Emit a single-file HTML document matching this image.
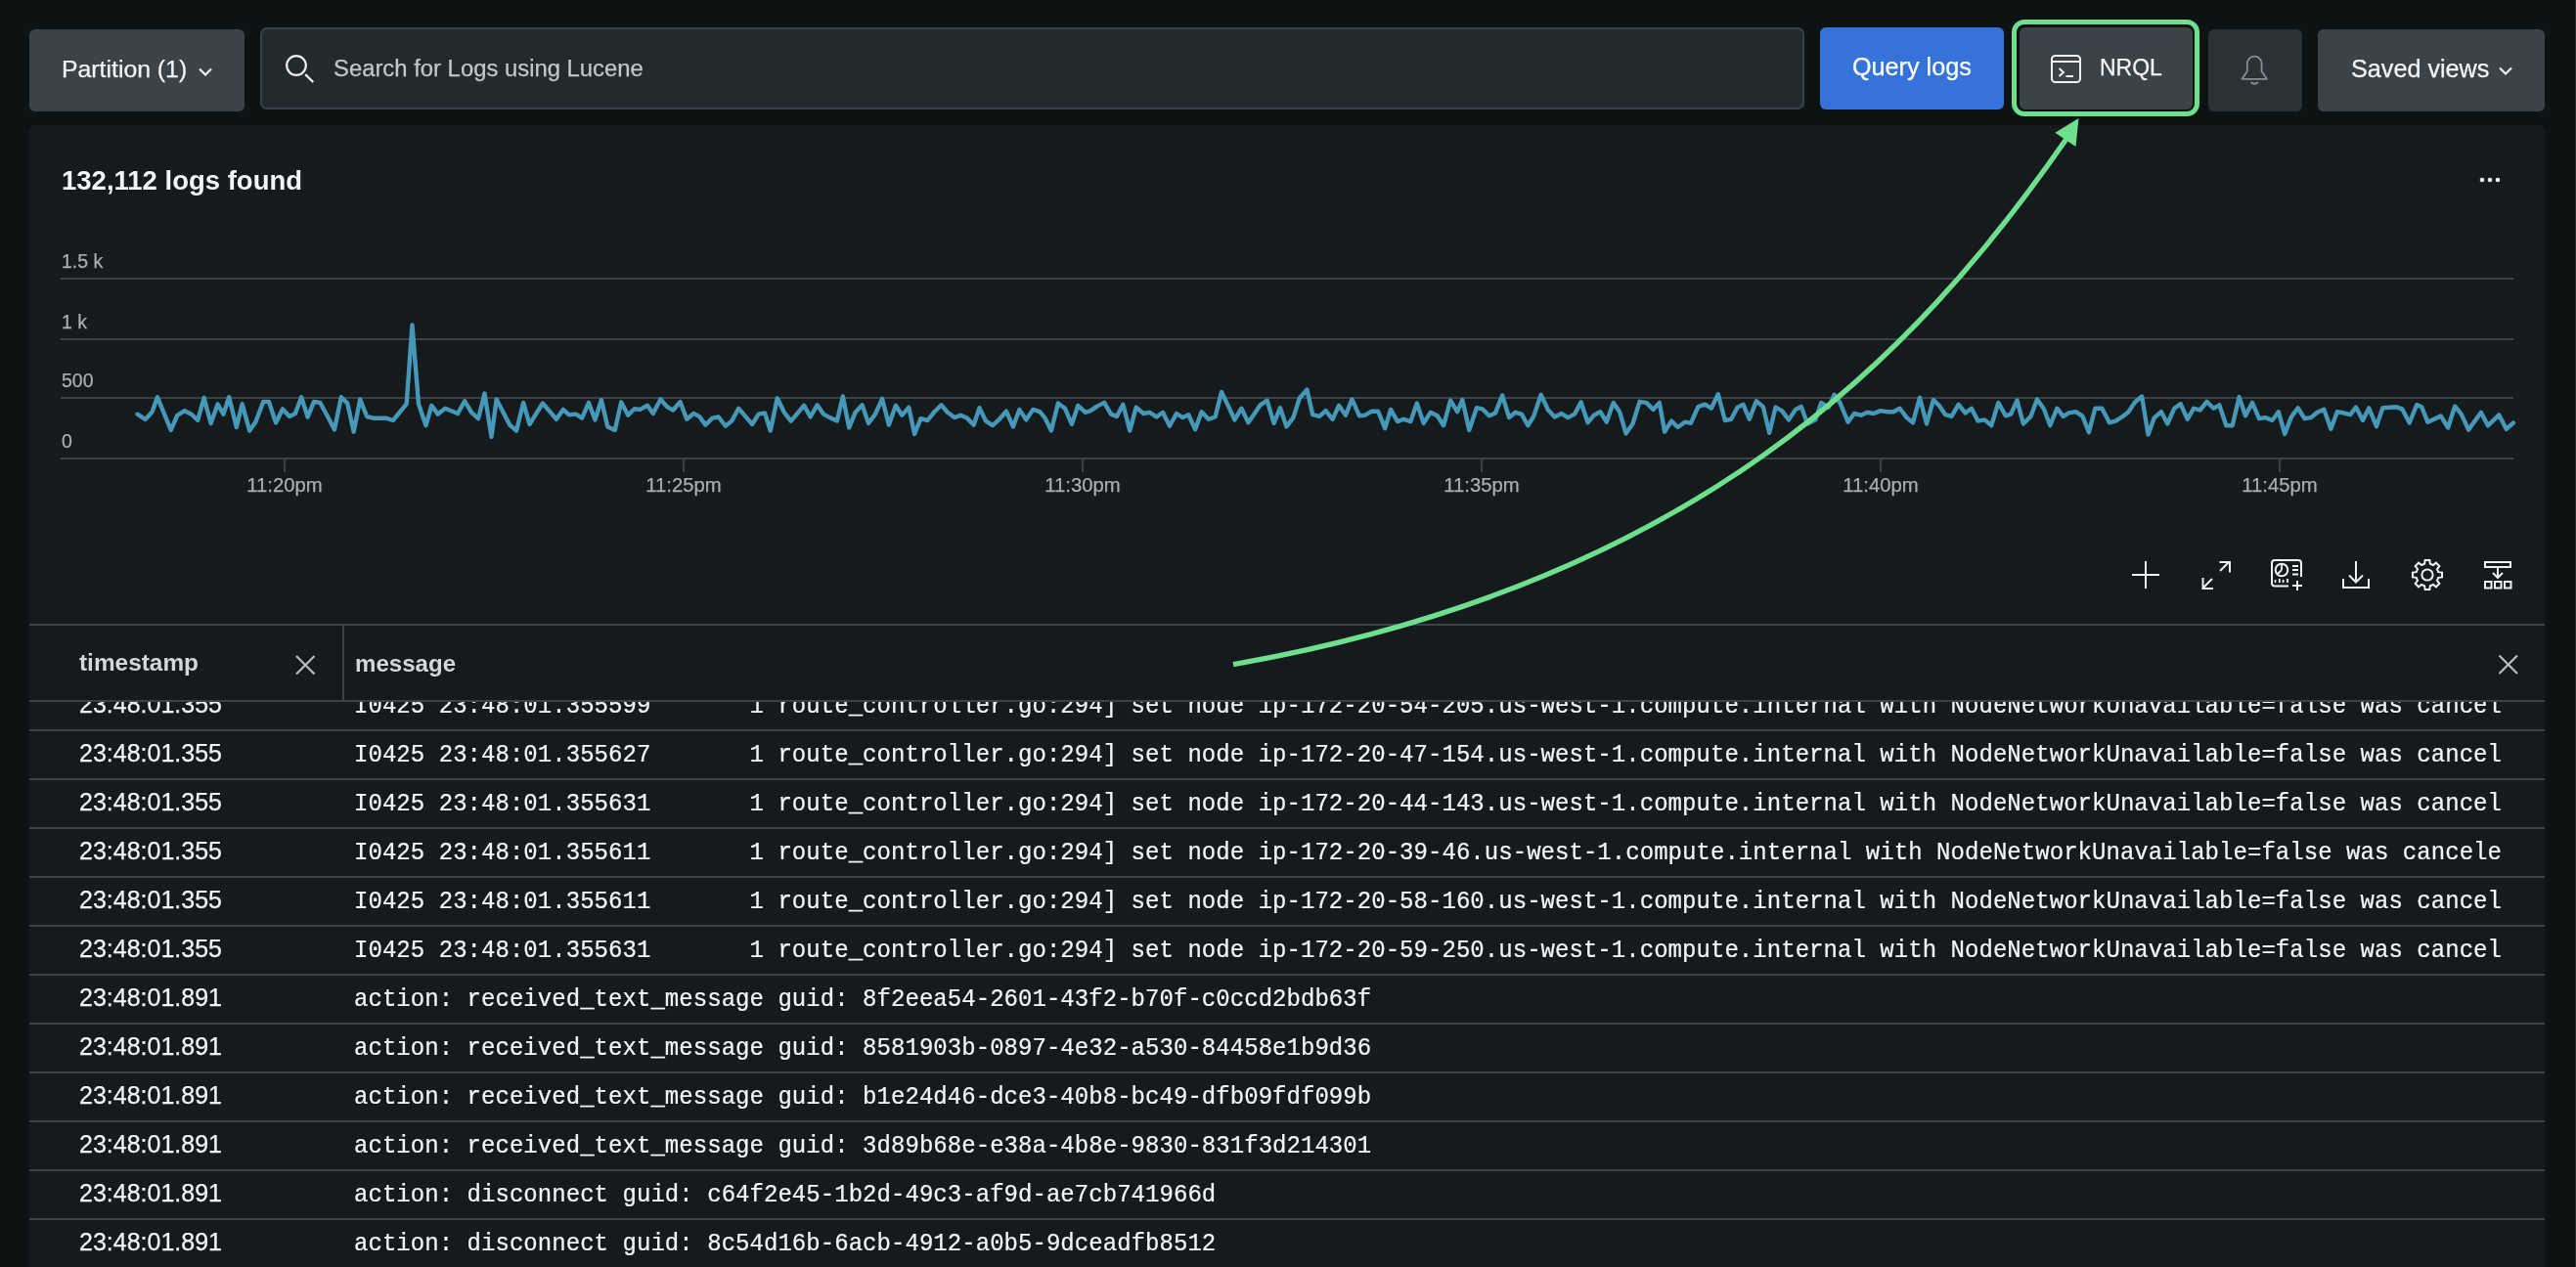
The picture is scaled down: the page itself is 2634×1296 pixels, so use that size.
<!DOCTYPE html>
<html><head><meta charset="utf-8"><title>Logs</title>
<style>
html,body{margin:0;padding:0}
body{width:2634px;height:1296px;overflow:hidden;background:#0d1312;position:relative;font-family:"Liberation Sans",sans-serif}
.t,.m,.b,svg{position:absolute}
.t,.m{will-change:transform}
.m{-webkit-text-stroke:0.22px currentColor}
.t{-webkit-text-stroke:0.25px currentColor}
.t{white-space:pre;font-family:"Liberation Sans",sans-serif}
.m{white-space:pre;font-family:"Liberation Mono",monospace}
</style></head><body>

<div class="b" style="left:30px;top:30px;width:220px;height:84px;background:#3b4248;border-radius:6px;"></div>
<div class="t" style="left:63px;top:59.32px;font-size:24.8px;line-height:24.8px;color:#f2f4f5;font-weight:400;">Partition (1)</div>
<svg style="left:200px;top:66px" width="20" height="14" viewBox="0 0 20 14"><path d="M4 4.5 L10 10.5 L16 4.5" fill="none" stroke="#eef0f1" stroke-width="2.2"/></svg>
<div class="b" style="left:266px;top:28px;width:1579px;height:84px;background:#222a2d;border-radius:7px;box-sizing:border-box;border:2px solid #394146;"></div>
<svg style="left:288px;top:52px" width="40" height="40" viewBox="0 0 40 40"><circle cx="15" cy="15" r="9.8" fill="none" stroke="#eef0f1" stroke-width="2.2"/><path d="M24.2 24.2 L32.2 32" stroke="#eef0f1" stroke-width="2.4"/></svg>
<div class="t" style="left:341px;top:57.53px;font-size:23.85px;line-height:23.85px;color:#c2c7ca;font-weight:400;">Search for Logs using Lucene</div>
<div class="b" style="left:1861px;top:28px;width:188px;height:84px;background:#3673d9;border-radius:6px;"></div>
<div class="t" style="left:1894px;top:56.48px;font-size:25.2px;line-height:25.2px;color:#ffffff;font-weight:400;">Query logs</div>
<div class="b" style="left:2057px;top:20px;width:192px;height:99px;box-sizing:border-box;border:5px solid #6ddf8d;border-radius:13px"></div>
<div class="b" style="left:2065px;top:28px;width:177px;height:84px;background:#3b4248;border-radius:6px;"></div>
<svg style="left:2094px;top:53px" width="36" height="34" viewBox="0 0 36 34"><rect x="4" y="4" width="29" height="27" rx="3.5" fill="none" stroke="#eef0f1" stroke-width="2"/><path d="M4 10 H33" stroke="#eef0f1" stroke-width="2"/><path d="M11.5 17 L16 21 L11.5 25" fill="none" stroke="#eef0f1" stroke-width="2"/><path d="M18.5 25 H26" stroke="#eef0f1" stroke-width="2"/></svg>
<div class="t" style="left:2147px;top:58.45px;font-size:23.0px;line-height:23.0px;color:#f2f4f5;font-weight:400;">NRQL</div>
<div class="b" style="left:2258px;top:30px;width:96px;height:84px;background:#2a3236;border-radius:6px;"></div>
<svg style="left:2286px;top:52px" width="40" height="40" viewBox="0 0 40 40"><path d="M6.4 28.8 L11.8 21 V13 A7.4 7.4 0 0 1 26.6 13 V21 L32 28.8 Z" fill="none" stroke="#878e93" stroke-width="1.8" stroke-linejoin="round"/><path d="M15.6 32 Q19.2 35.6 22.8 32" fill="none" stroke="#878e93" stroke-width="1.8"/></svg>
<div class="b" style="left:2370px;top:30px;width:232px;height:84px;background:#3b4248;border-radius:6px;"></div>
<div class="t" style="left:2403.5px;top:58.28px;font-size:25.2px;line-height:25.2px;color:#f2f4f5;font-weight:400;">Saved views</div>
<svg style="left:2552px;top:66px" width="20" height="14" viewBox="0 0 20 14"><path d="M4 3.5 L10 9.5 L16 3.5" fill="none" stroke="#eef0f1" stroke-width="2.2"/></svg>
<div class="b" style="left:2633px;top:0px;width:1px;height:1296px;background:#2b3032;border-radius:0px;"></div>
<div class="b" style="left:24px;top:137px;width:6px;height:1159px;background:#0f1213;border-radius:0px;"></div>
<div class="b" style="left:30px;top:128px;width:2572px;height:1200px;background:#151a1d;border-radius:6px;"></div>
<div class="t" style="left:63px;top:170.62px;font-size:27.5px;line-height:27.5px;color:#f2f4f5;font-weight:700;-webkit-text-stroke:0;">132,112 logs found</div>
<svg style="left:2530px;top:176px" width="32" height="16" viewBox="0 0 32 16"><circle cx="8" cy="8" r="2.3" fill="#eef0f1"/><circle cx="16" cy="8" r="2.3" fill="#eef0f1"/><circle cx="24" cy="8" r="2.3" fill="#eef0f1"/></svg>
<div class="b" style="left:62px;top:284px;width:2508px;height:2px;background:#3b4147;border-radius:0px;"></div>
<div class="t" style="left:63px;top:257.93px;font-size:19.5px;line-height:19.5px;color:#a9aeb2;font-weight:400;">1.5 k</div>
<div class="b" style="left:62px;top:346px;width:2508px;height:2px;background:#3b4147;border-radius:0px;"></div>
<div class="t" style="left:63px;top:319.93px;font-size:19.5px;line-height:19.5px;color:#a9aeb2;font-weight:400;">1 k</div>
<div class="b" style="left:62px;top:406px;width:2508px;height:2px;background:#3b4147;border-radius:0px;"></div>
<div class="t" style="left:63px;top:379.93px;font-size:19.5px;line-height:19.5px;color:#a9aeb2;font-weight:400;">500</div>
<div class="b" style="left:62px;top:468px;width:2508px;height:2px;background:#3b4147;border-radius:0px;"></div>
<div class="t" style="left:63px;top:441.93px;font-size:19.5px;line-height:19.5px;color:#a9aeb2;font-weight:400;">0</div>
<div class="b" style="left:290px;top:470px;width:2px;height:13px;background:#3b4147;border-radius:0px;"></div>
<div class="t" style="left:231px;width:120px;text-align:center;top:485.75px;font-size:20.3px;line-height:20.3px;color:#a9aeb2">11:20pm</div>
<div class="b" style="left:698px;top:470px;width:2px;height:13px;background:#3b4147;border-radius:0px;"></div>
<div class="t" style="left:639px;width:120px;text-align:center;top:485.75px;font-size:20.3px;line-height:20.3px;color:#a9aeb2">11:25pm</div>
<div class="b" style="left:1106px;top:470px;width:2px;height:13px;background:#3b4147;border-radius:0px;"></div>
<div class="t" style="left:1047px;width:120px;text-align:center;top:485.75px;font-size:20.3px;line-height:20.3px;color:#a9aeb2">11:30pm</div>
<div class="b" style="left:1514px;top:470px;width:2px;height:13px;background:#3b4147;border-radius:0px;"></div>
<div class="t" style="left:1455px;width:120px;text-align:center;top:485.75px;font-size:20.3px;line-height:20.3px;color:#a9aeb2">11:35pm</div>
<div class="b" style="left:1922px;top:470px;width:2px;height:13px;background:#3b4147;border-radius:0px;"></div>
<div class="t" style="left:1863px;width:120px;text-align:center;top:485.75px;font-size:20.3px;line-height:20.3px;color:#a9aeb2">11:40pm</div>
<div class="b" style="left:2330px;top:470px;width:2px;height:13px;background:#3b4147;border-radius:0px;"></div>
<div class="t" style="left:2271px;width:120px;text-align:center;top:485.75px;font-size:20.3px;line-height:20.3px;color:#a9aeb2">11:45pm</div>
<svg style="left:0;top:0" width="2634" height="1296" viewBox="0 0 2634 1296"><polyline points="140.5,423.7 148.6,428.9 155.6,421.3 160.9,406.2 174.8,440.0 181.2,424.8 188.8,420.2 195.8,423.7 202.2,430.0 208.6,406.8 215.6,433.0 222.6,413.2 228.4,423.7 234.2,406.2 241.8,437.0 247.6,413.2 255.2,440.6 261.6,431.2 269.2,410.9 275.0,410.9 282.0,432.4 289.0,418.4 296.0,426.0 301.8,423.1 308.2,406.2 314.6,426.6 321.0,410.9 327.4,412.0 335.0,426.0 342.0,439.4 348.9,406.2 355.3,412.6 361.7,441.7 368.2,408.5 375.1,426.0 381.5,427.7 394.4,427.7 401.9,430.0 415.7,413.1 421.5,332.5 428.0,413.1 435.5,435.2 441.3,414.8 447.7,423.6 455.3,417.7 468.1,423.0 475.1,410.2 482.1,421.8 489.1,428.2 495.5,402.6 502.5,446.9 507.7,408.4 521.1,434.6 528.1,440.5 535.1,411.9 541.5,434.0 554.9,412.5 568.9,428.8 575.8,418.9 581.7,424.2 588.7,423.6 595.1,427.6 602.0,411.9 608.5,429.4 614.9,409.0 621.3,436.4 628.8,439.9 635.2,411.3 642.2,424.7 648.6,418.3 654.4,418.9 662.0,414.8 667.8,423.0 675.4,408.4 681.8,415.9 688.2,419.5 695.5,411.0 702.2,428.8 709.2,423.0 715.0,425.9 721.4,434.6 728.4,427.6 734.8,426.5 741.8,435.8 748.2,430.6 755.2,417.7 762.2,425.9 769.2,434.0 775.6,423.6 782.0,422.4 787.8,440.5 794.8,407.3 801.8,421.8 808.8,430.6 815.2,423.0 822.2,414.8 828.6,426.5 835.6,414.3 842.0,423.6 848.4,427.1 855.9,430.6 861.8,405.5 868.2,437.5 874.6,421.8 881.6,414.3 888.0,432.9 895.0,423.6 902.0,407.8 908.9,434.6 915.9,414.8 922.3,424.7 929.3,416.6 935.1,444.0 941.5,428.2 948.5,430.0 955.5,421.2 962.5,414.3 968.9,421.8 975.9,427.1 982.3,424.7 988.7,427.6 995.7,434.6 1001.5,417.2 1008.0,430.6 1014.9,435.2 1021.9,428.8 1028.9,420.7 1035.9,436.4 1042.3,418.9 1049.3,429.4 1056.3,418.9 1063.3,421.2 1068.5,427.6 1074.9,440.5 1081.9,412.5 1088.9,417.7 1095.9,434.0 1102.3,414.8 1109.9,421.8 1115.1,420.1 1122.1,415.4 1129.1,411.9 1136.0,423.6 1141.9,425.9 1148.3,413.7 1155.3,440.5 1161.7,416.6 1169.2,423.0 1175.6,421.8 1182.6,426.5 1189.0,421.8 1196.0,435.8 1203.0,423.0 1209.4,427.1 1215.2,424.2 1222.2,439.3 1228.6,421.2 1235.6,428.8 1242.6,426.5 1249.0,400.9 1256.0,415.4 1262.4,429.4 1269.4,417.7 1276.4,432.3 1282.8,423.0 1288.6,414.3 1295.6,409.6 1302.6,432.9 1309.0,417.2 1315.4,436.4 1322.4,427.1 1328.8,407.3 1336.4,398.5 1342.2,424.2 1349.2,425.9 1355.6,420.1 1362.6,428.8 1369.0,414.8 1376.0,424.7 1382.4,408.4 1390.0,425.3 1395.8,424.7 1402.8,420.7 1409.2,420.7 1416.2,438.1 1422.0,418.9 1429.0,431.1 1435.4,428.8 1442.4,431.1 1448.8,412.5 1455.7,432.9 1462.7,421.8 1469.7,425.3 1476.1,435.2 1483.1,409.6 1490.1,421.2 1495.3,409.0 1502.3,439.9 1509.9,417.2 1515.7,418.3 1522.7,425.3 1529.1,422.4 1536.1,404.4 1543.1,427.1 1549.5,421.8 1555.9,423.6 1562.3,435.2 1568.2,425.9 1575.7,403.8 1582.7,418.9 1589.7,426.5 1596.7,423.0 1603.1,427.1 1610.1,423.6 1616.5,411.3 1623.5,432.3 1629.9,424.7 1636.3,421.2 1642.7,431.7 1649.7,411.9 1656.1,421.2 1662.5,443.4 1669.5,433.5 1676.5,410.8 1683.4,411.9 1690.4,418.9 1696.8,411.9 1702.1,441.6 1709.1,430.6 1715.5,437.0 1723.0,431.7 1728.9,432.9 1736.4,416.0 1743.4,413.7 1749.8,417.7 1756.8,403.2 1763.8,430.0 1770.2,428.8 1776.6,416.6 1782.4,413.7 1788.8,428.8 1795.8,410.2 1802.8,416.0 1809.2,442.8 1815.6,416.6 1822.0,420.1 1829.0,429.4 1836.0,418.9 1841.8,416.0 1848.2,433.5 1856.4,429.4 1862.2,411.9 1869.8,416.6 1875.6,403.8 1881.4,411.9 1889.6,431.7 1896.0,423.0 1903.0,424.7 1909.4,421.8 1915.8,423.0 1922.8,420.1 1929.2,421.2 1936.2,421.2 1942.6,417.7 1949.6,427.1 1956.0,432.3 1963.0,406.7 1970.0,433.5 1976.9,409.0 1983.3,415.4 1989.2,424.2 1995.6,425.9 2002.6,413.7 2009.5,422.4 2015.9,417.7 2022.4,430.6 2029.3,429.4 2036.3,435.2 2043.3,411.9 2050.9,425.3 2056.1,423.6 2062.5,409.6 2068.9,433.5 2076.5,425.9 2082.9,408.4 2089.9,418.3 2096.3,435.2 2103.3,417.7 2109.7,425.9 2115.5,422.4 2122.5,421.2 2129.5,425.9 2135.9,442.2 2142.3,417.7 2149.3,417.7 2156.9,432.3 2163.3,430.6 2169.7,426.5 2176.1,421.8 2183.1,411.3 2190.1,405.5 2196.5,444.5 2202.9,427.1 2209.9,421.2 2216.3,433.5 2223.3,417.7 2229.7,413.1 2236.7,428.8 2243.1,417.7 2249.5,419.5 2256.5,410.8 2263.4,417.7 2269.3,414.3 2276.3,435.2 2282.7,435.2 2289.6,406.1 2296.0,425.3 2303.0,411.9 2310.0,428.2 2316.4,427.1 2323.4,430.0 2329.8,421.2 2336.2,443.9 2342.6,427.1 2349.6,417.2 2356.6,428.2 2363.0,427.1 2369.4,421.8 2376.4,418.9 2383.4,438.7 2389.8,421.2 2396.2,422.4 2403.2,424.2 2409.0,416.6 2416.0,430.0 2422.2,417.4 2430.0,436.1 2436.3,417.2 2449.8,416.2 2456.2,418.3 2463.7,432.5 2471.2,414.0 2476.1,416.2 2482.5,431.8 2495.7,425.4 2503.1,437.5 2510.2,415.5 2516.6,423.3 2524.1,439.6 2536.9,421.9 2544.0,435.4 2555.3,424.4 2562.8,438.9 2569.9,432.5" fill="none" stroke="#4598b7" stroke-width="4.4" stroke-linejoin="round" stroke-linecap="round"/></svg>
<svg style="left:2170px;top:560px" width="420" height="56" viewBox="2170 560 420 56" fill="none" stroke="#eef0f1" stroke-width="2">
<path d="M2180 588 H2208 M2194 574 V602"/>
<path d="M2270 584 L2279 575 M2269.5 575 H2280 V585.5"/>
<path d="M2262 592 L2253 601 M2252.5 591 V602 H2263"/>
<path d="M2340 599.5 H2326 A3 3 0 0 1 2323 596.5 V576 A3 3 0 0 1 2326 573 H2350 A3 3 0 0 1 2353 576 V590"/>
<circle cx="2333" cy="583" r="6.3"/>
<path d="M2333 583 L2333 576.7 M2333 583 L2328.5 587.5" stroke-width="1.8"/>
<path d="M2344 579 H2350 M2344 583 H2350 M2344 587.5 H2350" stroke-width="1.8"/>
<path d="M2326.5 593 V596 M2330.8 592 V596 M2334.6 593 V596 M2339 592 V596" stroke-width="1.8"/>
<path d="M2344 599 H2354 M2349 594 V604"/>
<path d="M2396 592 V601 H2422 V592"/>
<path d="M2409 574 V595 M2402 588.5 L2409 595.5 L2416 588.5"/>
<circle cx="2482" cy="588" r="5.6"/>
<path d=""/>
<rect x="2541" y="575" width="26" height="5"/>
<path d="M2554 580 V590.5 M2549 586 L2554 591 L2559 586"/>
<rect x="2541" y="595" width="6.5" height="6.5"/><rect x="2551" y="595" width="6.5" height="6.5"/><rect x="2561" y="595" width="6.5" height="6.5"/>
</svg>
<svg style="left:2170px;top:560px" width="420" height="56" viewBox="2170 560 420 56"><path d="M2493.24 585.12 L2497.01 585.62 L2497.01 590.38 L2493.24 590.88 L2491.98 593.90 L2494.30 596.93 L2490.93 600.30 L2487.90 597.98 L2484.88 599.24 L2484.38 603.01 L2479.62 603.01 L2479.12 599.24 L2476.10 597.98 L2473.07 600.30 L2469.70 596.93 L2472.02 593.90 L2470.76 590.88 L2466.99 590.38 L2466.99 585.62 L2470.76 585.12 L2472.02 582.10 L2469.70 579.07 L2473.07 575.70 L2476.10 578.02 L2479.12 576.76 L2479.62 572.99 L2484.38 572.99 L2484.88 576.76 L2487.90 578.02 L2490.93 575.70 L2494.30 579.07 L2491.98 582.10 Z" fill="none" stroke="#eef0f1" stroke-width="2" stroke-linejoin="miter"/></svg>
<div class="b" style="left:30px;top:638px;width:2572px;height:2px;background:#3c4248;border-radius:0px;"></div>
<div class="t" style="left:81px;top:708.25px;font-size:25px;line-height:25px;color:#f2f4f5;font-weight:400;">23:48:01.355</div>
<div class="m" style="left:362px;top:711.26px;font-size:24px;line-height:24px;color:#f2f4f5;letter-spacing:0.045px;transform-origin:0 18.24px;transform:scaleY(1.07);">I0425 23:48:01.355599       1 route_controller.go:294] set node ip-172-20-54-205.us-west-1.compute.internal with NodeNetworkUnavailable=false was cancel</div>
<div class="t" style="left:81px;top:758.25px;font-size:25px;line-height:25px;color:#f2f4f5;font-weight:400;">23:48:01.355</div>
<div class="m" style="left:362px;top:761.26px;font-size:24px;line-height:24px;color:#f2f4f5;letter-spacing:0.045px;transform-origin:0 18.24px;transform:scaleY(1.07);">I0425 23:48:01.355627       1 route_controller.go:294] set node ip-172-20-47-154.us-west-1.compute.internal with NodeNetworkUnavailable=false was cancel</div>
<div class="b" style="left:30px;top:746px;width:2572px;height:2px;background:#3c4248;border-radius:0px;"></div>
<div class="t" style="left:81px;top:808.25px;font-size:25px;line-height:25px;color:#f2f4f5;font-weight:400;">23:48:01.355</div>
<div class="m" style="left:362px;top:811.26px;font-size:24px;line-height:24px;color:#f2f4f5;letter-spacing:0.045px;transform-origin:0 18.24px;transform:scaleY(1.07);">I0425 23:48:01.355631       1 route_controller.go:294] set node ip-172-20-44-143.us-west-1.compute.internal with NodeNetworkUnavailable=false was cancel</div>
<div class="b" style="left:30px;top:796px;width:2572px;height:2px;background:#3c4248;border-radius:0px;"></div>
<div class="t" style="left:81px;top:858.25px;font-size:25px;line-height:25px;color:#f2f4f5;font-weight:400;">23:48:01.355</div>
<div class="m" style="left:362px;top:861.26px;font-size:24px;line-height:24px;color:#f2f4f5;letter-spacing:0.045px;transform-origin:0 18.24px;transform:scaleY(1.07);">I0425 23:48:01.355611       1 route_controller.go:294] set node ip-172-20-39-46.us-west-1.compute.internal with NodeNetworkUnavailable=false was cancele</div>
<div class="b" style="left:30px;top:846px;width:2572px;height:2px;background:#3c4248;border-radius:0px;"></div>
<div class="t" style="left:81px;top:908.25px;font-size:25px;line-height:25px;color:#f2f4f5;font-weight:400;">23:48:01.355</div>
<div class="m" style="left:362px;top:911.26px;font-size:24px;line-height:24px;color:#f2f4f5;letter-spacing:0.045px;transform-origin:0 18.24px;transform:scaleY(1.07);">I0425 23:48:01.355611       1 route_controller.go:294] set node ip-172-20-58-160.us-west-1.compute.internal with NodeNetworkUnavailable=false was cancel</div>
<div class="b" style="left:30px;top:896px;width:2572px;height:2px;background:#3c4248;border-radius:0px;"></div>
<div class="t" style="left:81px;top:958.25px;font-size:25px;line-height:25px;color:#f2f4f5;font-weight:400;">23:48:01.355</div>
<div class="m" style="left:362px;top:961.26px;font-size:24px;line-height:24px;color:#f2f4f5;letter-spacing:0.045px;transform-origin:0 18.24px;transform:scaleY(1.07);">I0425 23:48:01.355631       1 route_controller.go:294] set node ip-172-20-59-250.us-west-1.compute.internal with NodeNetworkUnavailable=false was cancel</div>
<div class="b" style="left:30px;top:946px;width:2572px;height:2px;background:#3c4248;border-radius:0px;"></div>
<div class="t" style="left:81px;top:1008.25px;font-size:25px;line-height:25px;color:#f2f4f5;font-weight:400;">23:48:01.891</div>
<div class="m" style="left:362px;top:1011.26px;font-size:24px;line-height:24px;color:#f2f4f5;letter-spacing:0.045px;transform-origin:0 18.24px;transform:scaleY(1.07);">action: received_text_message guid: 8f2eea54-2601-43f2-b70f-c0ccd2bdb63f</div>
<div class="b" style="left:30px;top:996px;width:2572px;height:2px;background:#3c4248;border-radius:0px;"></div>
<div class="t" style="left:81px;top:1058.25px;font-size:25px;line-height:25px;color:#f2f4f5;font-weight:400;">23:48:01.891</div>
<div class="m" style="left:362px;top:1061.26px;font-size:24px;line-height:24px;color:#f2f4f5;letter-spacing:0.045px;transform-origin:0 18.24px;transform:scaleY(1.07);">action: received_text_message guid: 8581903b-0897-4e32-a530-84458e1b9d36</div>
<div class="b" style="left:30px;top:1046px;width:2572px;height:2px;background:#3c4248;border-radius:0px;"></div>
<div class="t" style="left:81px;top:1108.25px;font-size:25px;line-height:25px;color:#f2f4f5;font-weight:400;">23:48:01.891</div>
<div class="m" style="left:362px;top:1111.26px;font-size:24px;line-height:24px;color:#f2f4f5;letter-spacing:0.045px;transform-origin:0 18.24px;transform:scaleY(1.07);">action: received_text_message guid: b1e24d46-dce3-40b8-bc49-dfb09fdf099b</div>
<div class="b" style="left:30px;top:1096px;width:2572px;height:2px;background:#3c4248;border-radius:0px;"></div>
<div class="t" style="left:81px;top:1158.25px;font-size:25px;line-height:25px;color:#f2f4f5;font-weight:400;">23:48:01.891</div>
<div class="m" style="left:362px;top:1161.26px;font-size:24px;line-height:24px;color:#f2f4f5;letter-spacing:0.045px;transform-origin:0 18.24px;transform:scaleY(1.07);">action: received_text_message guid: 3d89b68e-e38a-4b8e-9830-831f3d214301</div>
<div class="b" style="left:30px;top:1146px;width:2572px;height:2px;background:#3c4248;border-radius:0px;"></div>
<div class="t" style="left:81px;top:1208.25px;font-size:25px;line-height:25px;color:#f2f4f5;font-weight:400;">23:48:01.891</div>
<div class="m" style="left:362px;top:1211.26px;font-size:24px;line-height:24px;color:#f2f4f5;letter-spacing:0.045px;transform-origin:0 18.24px;transform:scaleY(1.07);">action: disconnect guid: c64f2e45-1b2d-49c3-af9d-ae7cb741966d</div>
<div class="b" style="left:30px;top:1196px;width:2572px;height:2px;background:#3c4248;border-radius:0px;"></div>
<div class="t" style="left:81px;top:1258.25px;font-size:25px;line-height:25px;color:#f2f4f5;font-weight:400;">23:48:01.891</div>
<div class="m" style="left:362px;top:1261.26px;font-size:24px;line-height:24px;color:#f2f4f5;letter-spacing:0.045px;transform-origin:0 18.24px;transform:scaleY(1.07);">action: disconnect guid: 8c54d16b-6acb-4912-a0b5-9dceadfb8512</div>
<div class="b" style="left:30px;top:1246px;width:2572px;height:2px;background:#3c4248;border-radius:0px;"></div>
<div class="b" style="left:30px;top:640px;width:2572px;height:76px;background:#151a1d;border-radius:0px;"></div>
<div class="b" style="left:30px;top:716px;width:2572px;height:2px;background:#3c4248;border-radius:0px;"></div>
<div class="b" style="left:350px;top:640px;width:2px;height:76px;background:#3c4248;border-radius:0px;"></div>
<div class="t" style="left:81px;top:666.26px;font-size:24.4px;line-height:24.4px;color:#d3d7d9;font-weight:700;-webkit-text-stroke:0;">timestamp</div>
<div class="t" style="left:363px;top:666.51px;font-size:24.1px;line-height:24.1px;color:#d3d7d9;font-weight:700;-webkit-text-stroke:0;">message</div>
<svg style="left:298px;top:666px" width="28" height="28" viewBox="0 0 28 28"><path d="M5 5 L23.5 23.5 M23.5 5 L5 23.5" stroke="#b9bdc0" stroke-width="2.2"/></svg>
<svg style="left:2551px;top:666px" width="28" height="28" viewBox="0 0 28 28"><path d="M4.5 4.5 L23 23 M23 4.5 L4.5 23" stroke="#b9bdc0" stroke-width="2.2"/></svg>
<svg style="left:0;top:0" width="2634" height="1296" viewBox="0 0 2634 1296"><path d="M1261 679.6 C1732.8 596.6 1956.7 367.2 2113 142" fill="none" stroke="#6ddf8d" stroke-width="5.3"/><path d="M2125.5 121 L2101.3 135.8 L2122.5 150 Z" fill="#6ddf8d"/></svg>
</body></html>
